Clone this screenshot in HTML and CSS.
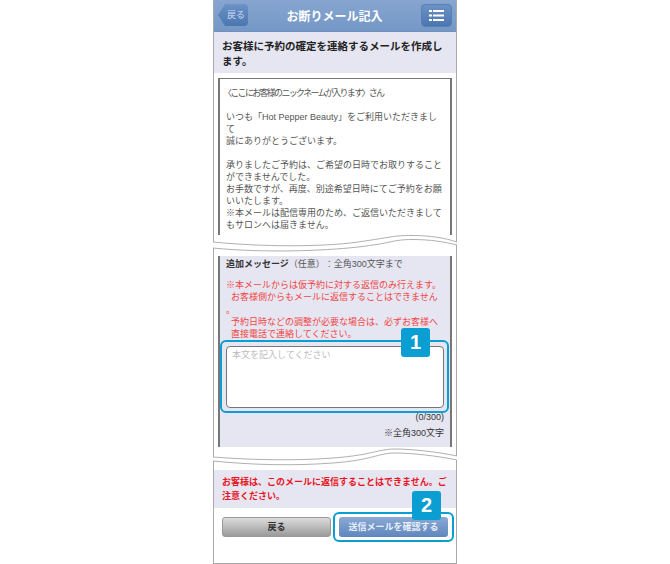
FILE: index.html
```html
<!DOCTYPE html>
<html lang="ja">
<head>
  <meta charset="UTF-8">
  <meta name="viewport" content="width=device-width, initial-scale=1.0">
  <title>お断りメール記入</title>
  <link rel="stylesheet" href="styles.css">
</head>
<body>
<div class="phone">
  <header class="topbar">
    <a class="back">戻る</a>
    <h1>お断りメール記入</h1>
    <a class="menu">
      <svg width="15" height="11" viewBox="0 0 15 11" fill="#fff">
        <rect x="0" y="0" width="3" height="2"/><rect x="4" y="0" width="11" height="2"/>
        <rect x="0" y="4.5" width="3" height="2"/><rect x="4" y="4.5" width="11" height="2"/>
        <rect x="0" y="9" width="3" height="2"/><rect x="4" y="9" width="11" height="2"/>
      </svg>
    </a>
  </header>

  <p class="intro">お客様に予約の確定を連絡するメールを作成します。</p>

  <div class="mail">
    <div class="mail-body">
      <p class="nickname">〈ここにお客様のニックネームが入ります〉さん</p>
      <p>いつも「Hot Pepper Beauty」をご利用いただきまして<br>誠にありがとうございます。</p>
      <p>承りましたご予約は、ご希望の日時でお取りすることができませんでした。<br>お手数ですが、再度、別途希望日時にてご予約をお願いいたします。<br>※本メールは配信専用のため、ご返信いただきましてもサロンへは届きません。</p>
    </div>
  </div>

  <svg class="wave" width="244" height="21" viewBox="0 0 244 21">
    <path class="wave-gap" d="M0 7C50 12 110 12 145 7S180 .5 199 .5 232 3 244 7V10C232 7 215 4.5 199 4.5S170 8 145 12 50 18 0 13Z"/>
    <path class="wave-line" d="M0 7C50 12 110 12 145 7S180 .5 199 .5 232 3 244 7"/>
    <path class="wave-line" d="M0 13C50 18 110 16 145 12S180 4.5 199 4.5 232 7 244 10"/>
  </svg>

  <div class="extra">
    <div class="extra-inner">
      <p class="extra-title"><b>追加メッセージ</b>（任意）：全角300文字まで</p>
      <ul class="warn">
        <li>※本メールからは仮予約に対する返信のみ行えます。</li>
        <li class="indent">お客様側からもメールに返信することはできません</li>
        <li>。</li>
        <li class="indent">予約日時などの調整が必要な場合は、必ずお客様へ直接電話で連絡してください。</li>
      </ul>
      <div class="field">
        <div class="input">本文を記入してください</div>
        <span class="badge badge-one">1</span>
      </div>
      <p class="count">(0/300)</p>
      <p class="limit">※全角300文字</p>
    </div>
  </div>

  <svg class="wave" width="244" height="23" viewBox="0 0 244 23">
    <path class="wave-gap" d="M0 10C40 13 80 14 120 11S165 2 182 2 225 5 244 9V13C225 9 200 6 182 6S150 13 120 16 40 18 0 14Z"/>
    <path class="wave-line" d="M0 10C40 13 80 14 120 11S165 2 182 2 225 5 244 9"/>
    <path class="wave-line" d="M0 14C40 18 80 19 120 16S165 6 182 6 225 9 244 13"/>
  </svg>

  <p class="notice">お客様は、このメールに返信することはできません。ご注意ください。</p>

  <div class="actions">
    <a class="btn btn-gray">戻る</a>
    <div class="btn-ring">
      <a class="btn btn-blue">送信メールを確認する</a>
      <span class="badge badge-two">2</span>
    </div>
  </div>
</div>
</body>
</html>
```

FILE: styles.css
```css
* {
  box-sizing: border-box;
}
body {
  margin: 0;
  background: #fff;
  font-family: "Liberation Sans", "Noto Sans CJK JP", sans-serif;
  text-spacing-trim: space-all;
  color: #333;
}
p, h1, ul {
  margin: 0;
  padding: 0;
}
.phone {
  width: 244px;
  height: 564px;
  margin: 0 auto;
  border-left: 1px solid #aaa;
  border-right: 1px solid #aaa;
  border-bottom: 1px solid #aaa;
}

/* header */
.topbar {
  height: 32px;
  display: flex;
  align-items: center;
  justify-content: space-between;
  padding: 0 4px 1px;
  background: linear-gradient(#86a6d0, #7597c6);
  border-bottom: 1px solid #6f90bd;
}
.topbar h1 {
  font-size: 12px;
  font-weight: bold;
  color: #fff;
}
.back {
  width: 30px;
  height: 22px;
  line-height: 22px;
  padding-left: 9px;
  font-size: 9px;
  color: #cfdcee;
  background: linear-gradient(#6c92c6, #4a76b0);
  border-radius: 4px;
  clip-path: polygon(7px 0, 100% 0, 100% 100%, 7px 100%, 0 50%);
}
.menu {
  width: 31px;
  height: 23px;
  display: flex;
  align-items: center;
  justify-content: center;
  background: linear-gradient(#6c92c6, #4a76b0);
  border: 1px solid #5b7fb0;
  border-radius: 4px;
}

.intro {
  height: 41px;
  padding: 7px 8px 0;
  background: #e6e6f2;
  font-size: 10.5px;
  line-height: 14.5px;
  font-weight: bold;
  color: #222;
}

/* mail preview */
.mail {
  padding: 5px 4px 0;
}
.mail-body {
  height: 157px;
  padding: 8px 6px 0;
  border: 2px solid #777;
  border-top-width: 1px;
  border-bottom: 0;
  font-size: 9px;
  line-height: 12px;
  color: #555;
}
.mail-body p {
  margin-bottom: 12px;
}
.mail-body .nickname {
  margin-left: -3px;
  letter-spacing: -1.7px;
}

/* torn paper between the sections */
.wave {
  display: block;
  margin: 0 -1px;
}
.wave-gap {
  fill: #fff;
}
.wave-line {
  fill: none;
  stroke: #b0b0b0;
}

/* additional message */
.extra {
  padding: 0 4px;
}
.extra-inner {
  height: 191px;
  padding: 1px 6px 0;
  background: #e6e6f2;
  border-left: 2px solid #777;
  border-right: 2px solid #777;
}
.extra-title {
  font-size: 9px;
  line-height: 14px;
  color: #555;
}
.extra-title b {
  color: #333;
}
.warn {
  list-style: none;
  margin-top: 8px;
  font-size: 9px;
  line-height: 12.3px;
  color: #f04545;
}
.warn .indent {
  padding-left: 5px;
}
.field {
  position: relative;
  margin: 0 -5px 0 -6px;
  padding: 4px 3px 3px 4px;
  border: 2px solid #0a9ed3;
  border-radius: 6px;
}
.input {
  height: 62px;
  padding: 2px 5px;
  background: #fff;
  border: 1px solid #777;
  border-radius: 4px;
  font-size: 9px;
  line-height: 12px;
  color: #bbb;
}
.badge {
  position: absolute;
  width: 29px;
  height: 29px;
  line-height: 29px;
  text-align: center;
  background: #0a9ed3;
  border-radius: 3px;
  font-size: 20px;
  font-weight: bold;
  color: #fff;
}
.badge-one {
  top: -14px;
  right: 17px;
}
.badge-two {
  top: -23px;
  right: 11px;
}
.count {
  text-align: right;
  font-size: 9px;
  line-height: 8px;
}
.limit {
  margin-top: 6px;
  text-align: right;
  font-size: 9px;
  line-height: 12px;
}

.notice {
  height: 38px;
  padding: 5px 8px 0;
  background: #e6e6f2;
  font-size: 9px;
  line-height: 14px;
  font-weight: bold;
  color: #e8141e;
}

/* buttons */
.actions {
  display: flex;
  align-items: center;
  gap: 2px;
  padding: 4px 2px 0 8px;
}
.btn {
  display: block;
  width: 109px;
  height: 20px;
  line-height: 20px;
  text-align: center;
  border-radius: 3px;
  font-size: 9px;
  font-weight: bold;
}
.btn-gray {
  background: linear-gradient(#dcdcdc, #9a9a9a);
  border: 1px solid #999;
  line-height: 18px;
  color: #333;
}
.btn-ring {
  position: relative;
  padding: 3px 4px;
  border: 2px solid #0a9ed3;
  border-radius: 6px;
}
.btn-blue {
  background: linear-gradient(#8aa9d5, #5f86bd);
  color: #e8eef8;
}
```
